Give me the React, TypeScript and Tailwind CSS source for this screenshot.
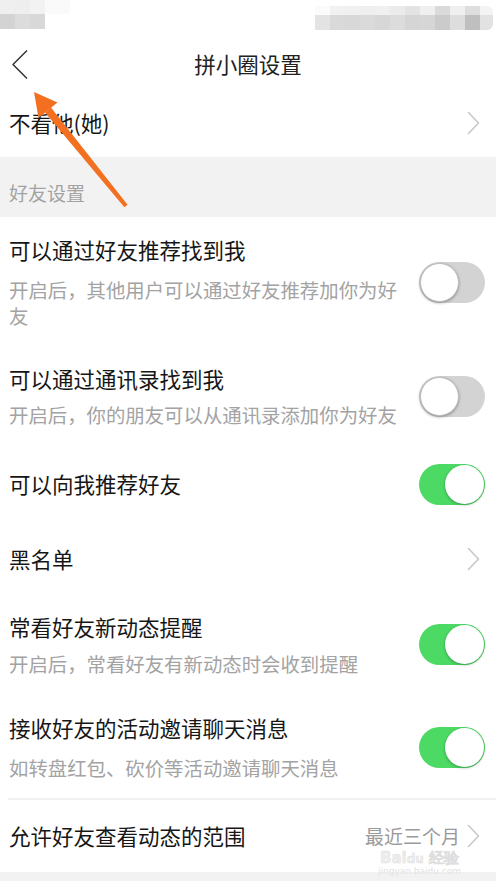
import React from "react";

const Chevron = ({ className = "" }: { className?: string }) => (
  <svg width="13" height="24" viewBox="0 0 13 24" className={className}>
    <path d="M1.5 1.5 L11.5 12 L1.5 22.5" fill="none" stroke="#c8c8cc" strokeWidth="1.6" strokeLinecap="round" strokeLinejoin="round" />
  </svg>
);

const Toggle = ({ on }: { on: boolean }) =>
  on ? (
    <div className="flex h-[41px] w-[66px] shrink-0 items-center justify-end rounded-full bg-[#4cd964] pr-[1px]">
      <div className="h-[39px] w-[39px] rounded-full bg-white shadow-[0_1px_3px_rgba(0,0,0,0.3)]" />
    </div>
  ) : (
    <div className="flex h-[41px] w-[66px] shrink-0 items-center justify-start rounded-full bg-[#d3d3d3] pl-[1px]">
      <div className="h-[39px] w-[39px] rounded-full border border-[#bdbdbd] bg-white shadow-[0_1px_3px_rgba(0,0,0,0.35)]" />
    </div>
  );

const ToggleRow = ({
  title,
  sub,
  on,
  pt,
  gap,
  pb,
}: {
  title: string;
  sub: string;
  on: boolean;
  pt: string;
  gap: string;
  pb: string;
}) => (
  <div className={`flex items-center pl-[9px] pr-[11px] ${pt} ${pb}`}>
    <div className="flex w-[400px] flex-col">
      <div className="text-[21.5px] leading-[30px] text-[#161616]">{title}</div>
      <div className={`text-[19.4px] leading-[26px] text-[#a3a3a3] ${gap}`}>{sub}</div>
    </div>
    <div className="ml-auto">
      <Toggle on={on} />
    </div>
  </div>
);

export default function App() {
  return (
    <div className="relative flex h-[881px] w-[496px] flex-col overflow-hidden bg-white font-['Noto_Sans_CJK_SC',sans-serif]">
      {/* status bar (pixelated) */}
      <div className="flex h-[40px] shrink-0 justify-between">
        <div className="flex flex-col">
          <div className="flex h-[14px]">
            <div className="w-[15px] bg-[#efefef]" />
            <div className="w-[15px] bg-[#eeeeee]" />
            <div className="w-[15px] bg-[#f2f2f2]" />
            <div className="w-[25px] bg-[#fafafa]" />
          </div>
          <div className="flex h-[15px]">
            <div className="w-[15px] bg-[#d3d3d3]" />
            <div className="w-[15px] bg-[#dcdcdc]" />
            <div className="w-[15px] bg-[#d8d8d8]" />
          </div>
        </div>
        <div className="mr-[3px] mt-[6px] flex h-[24px] flex-col">
          <div className="flex h-[9px]">
            <div className="w-[15px] bg-[#fbfbfb]" />
            <div className="w-[15px] bg-[#f1f1f1]" />
            <div className="w-[15px] bg-[#f0f0f0]" />
            <div className="w-[15px] bg-[#efefef]" />
            <div className="w-[15px] bg-[#f0f0f0]" />
            <div className="w-[15px] bg-[#ebebeb]" />
            <div className="w-[15px] bg-[#e3e3e3]" />
            <div className="w-[15px] bg-[#efefef]" />
            <div className="w-[15px] bg-[#dadada]" />
            <div className="w-[15px] bg-[#efefef]" />
            <div className="w-[15px] bg-[#dedede]" />
            <div className="w-[13px] rounded-tr-[6px] bg-[#f3f3f3]" />
          </div>
          <div className="flex h-[15px]">
            <div className="w-[15px] bg-[#e3e3e3]" />
            <div className="w-[15px] bg-[#d9d9d9]" />
            <div className="w-[15px] bg-[#d8d8d8]" />
            <div className="w-[15px] bg-[#dadada]" />
            <div className="w-[15px] bg-[#d7d7d7]" />
            <div className="w-[15px] bg-[#dcdcdc]" />
            <div className="w-[15px] bg-[#d5d5d5]" />
            <div className="w-[15px] bg-[#d6d6d6]" />
            <div className="w-[15px] bg-[#cbcbcb]" />
            <div className="w-[15px] bg-[#dddddd]" />
            <div className="w-[15px] bg-[#bfbfbf]" />
            <div className="w-[13px] rounded-br-[6px] bg-[#e2e2e2]" />
          </div>
        </div>
      </div>

      {/* header */}
      <div className="grid h-[48px] shrink-0 grid-cols-[60px_1fr_60px] items-center">
        <div className="pl-[11px]">
          <svg width="18" height="31" viewBox="0 0 18 31">
            <path d="M16 1.5 L2 15.5 L16 29.5" fill="none" stroke="#333" strokeWidth="1.5" strokeLinejoin="round" />
          </svg>
        </div>
        <div className="text-center text-[21.5px] leading-[30px] text-[#222]">拼小圈设置</div>
        <div />
      </div>

      {/* 不看他 */}
      <div className="flex h-[69px] shrink-0 items-center justify-between pl-[9px] pr-[16px]">
        <div className="text-[21.5px] leading-[30px] text-[#161616]">不看他(她)</div>
        <Chevron />
      </div>

      {/* section header */}
      <div className="flex h-[60px] shrink-0 items-end bg-[#f2f2f2] pb-[11px] pl-[9px]">
        <div className="text-[19px] leading-[26px] text-[#a3a3a3]">好友设置</div>
      </div>

      <ToggleRow
        title="可以通过好友推荐找到我"
        sub="开启后，其他用户可以通过好友推荐加你为好友"
        on={false}
        pt="pt-[18px]"
        gap="mt-[12px]"
        pb="pb-[18px]"
      />
      <ToggleRow
        title="可以通过通讯录找到我"
        sub="开启后，你的朋友可以从通讯录添加你为好友"
        on={false}
        pt="pt-[17px]"
        gap="mt-[8px]"
        pb="pb-[17px]"
      />

      <div className="flex h-[78px] shrink-0 items-center justify-between pl-[9px] pr-[11px]">
        <div className="text-[21.5px] leading-[30px] text-[#161616]">可以向我推荐好友</div>
        <Toggle on={true} />
      </div>

      <div className="flex h-[72px] shrink-0 items-center justify-between pl-[9px] pr-[16px]">
        <div className="text-[21.5px] leading-[30px] text-[#161616]">黑名单</div>
        <Chevron />
      </div>

      <ToggleRow
        title="常看好友新动态提醒"
        sub="开启后，常看好友有新动态时会收到提醒"
        on={true}
        pt="pt-[17px]"
        gap="mt-[9px]"
        pb="pb-[17px]"
      />
      <ToggleRow
        title="接收好友的活动邀请聊天消息"
        sub="如转盘红包、砍价等活动邀请聊天消息"
        on={true}
        pt="pt-[19px]"
        gap="mt-[12px]"
        pb="pb-[17px]"
      />

      <div className="ml-[8px] h-[2px] shrink-0 bg-[#f1f1f1]" />

      <div className="flex h-[72px] shrink-0 items-center pl-[9px] pr-[16px]">
        <div className="text-[21.5px] leading-[30px] text-[#161616]">允许好友查看动态的范围</div>
        <div className="ml-auto mr-[7px] text-[19px] leading-[22px] text-[#9a9a9a]">最近三个月</div>
        <Chevron />
      </div>

      <div className="flex-1 bg-[#f2f2f2]" />

      {/* watermark */}
      <div className="pointer-events-none absolute left-[378px] top-[851px] flex flex-col items-center">
        <div className="font-['DejaVu_Sans',sans-serif] text-[15px] font-bold leading-[14px] text-[#efefef] [-webkit-text-stroke:0.5px_#dedede]">
          Bai<span className="text-[12px]">du</span> 经验
        </div>
        <div className="font-['DejaVu_Sans',sans-serif] text-[9px] leading-[10px] text-[#e2e2e2]">jingyan.baidu.com</div>
      </div>

      {/* annotation arrow */}
      <svg className="pointer-events-none absolute left-0 top-0" width="496" height="881" viewBox="0 0 496 881">
        <polygon points="51,107.5 127.6,204.7 124.4,207.3 45,112.5" fill="#f37021" />
        <polygon points="34,92 57.5,102.5 38.5,118" fill="#f37021" />
      </svg>
    </div>
  );
}
